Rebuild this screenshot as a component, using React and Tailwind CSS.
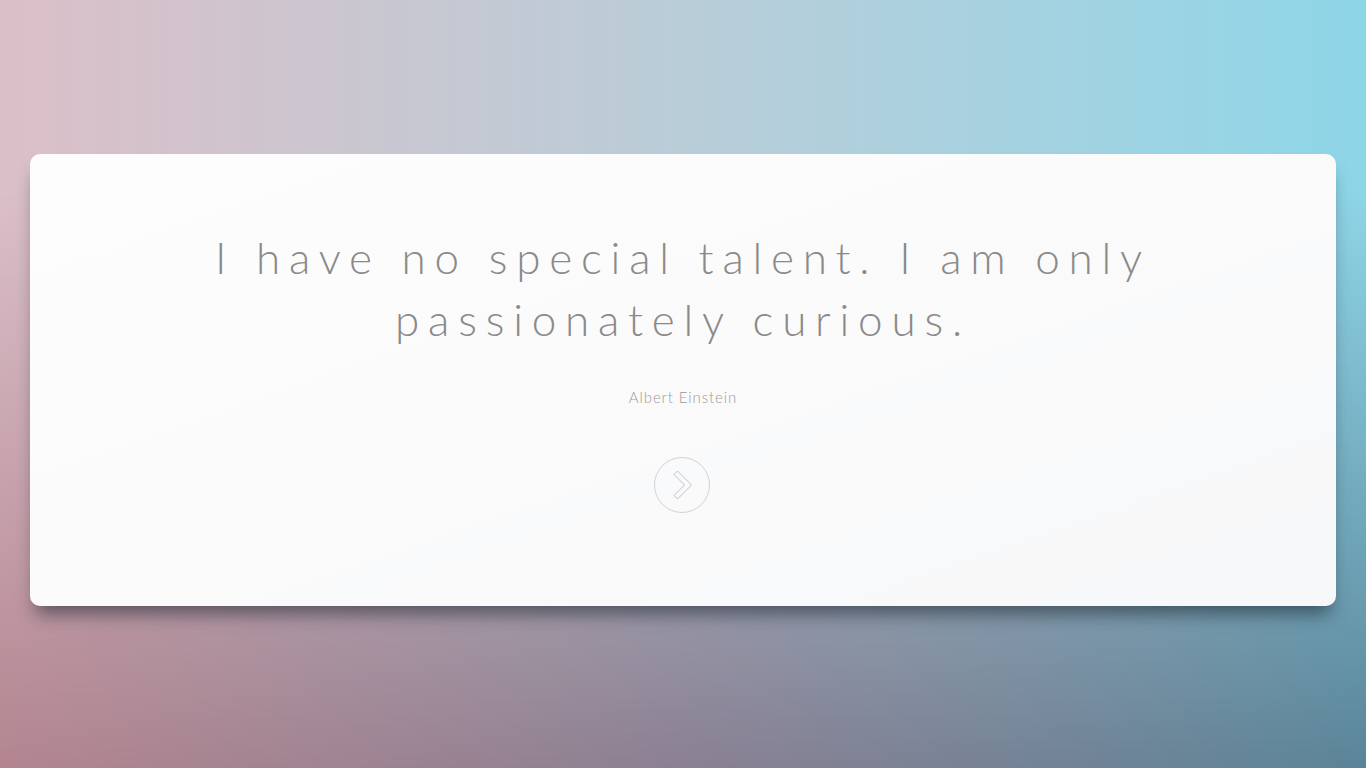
import React from 'react';

const quote = {
  text: 'I have no special talent. I am only passionately curious.',
  author: 'Albert Einstein',
};

const NextIcon = () => (
  <svg width="56" height="56" viewBox="0 0 56 56" fill="none">
    <circle cx="28" cy="28" r="27.5" stroke="#d2d2d5" strokeWidth="1" />
    <path
      d="M20 17.5 L23.5 14 L37.5 28 L23.5 42 L20 38.5 L30.5 28 Z"
      stroke="#c2c2c6"
      strokeWidth="1"
      strokeLinejoin="round"
    />
  </svg>
);

const App = () => {
  return (
    <div className="relative min-h-screen w-full overflow-hidden bg-gradient-to-r from-[#dbbfc8] via-[#b9cdd8] to-[#8dd6e8]">
      <div className="absolute inset-0 bg-gradient-to-r from-[#b38590] via-[#8a8092] to-[#5a8498] [mask-image:linear-gradient(to_bottom,transparent_25%,black_100%)]" />
      <div className="relative flex min-h-screen items-center px-[30px] pb-[8px]">
        <div className="w-full h-[452px] rounded-[10px] bg-gradient-to-br from-[#fefdfe] to-[#f7f8f9] shadow-[0_14px_18px_-6px_rgba(20,30,40,0.55)] flex flex-col items-center pt-[72px]">
          <p className="max-w-[990px] text-center text-[#8a8a8a] text-[44px] leading-[62px] tracking-[0.2em] font-light [font-family:'Lato','Open_Sans',sans-serif]">
            {quote.text}
          </p>
          <p className="mt-[36px] text-[15px] text-[#9a9a9a] tracking-[0.06em] font-light [font-family:'Lato','Open_Sans',sans-serif]">
            {quote.author}
          </p>
          <button className="mt-[48px] -ml-[3px]">
            <NextIcon />
          </button>
        </div>
      </div>
    </div>
  );
};

export default App;
